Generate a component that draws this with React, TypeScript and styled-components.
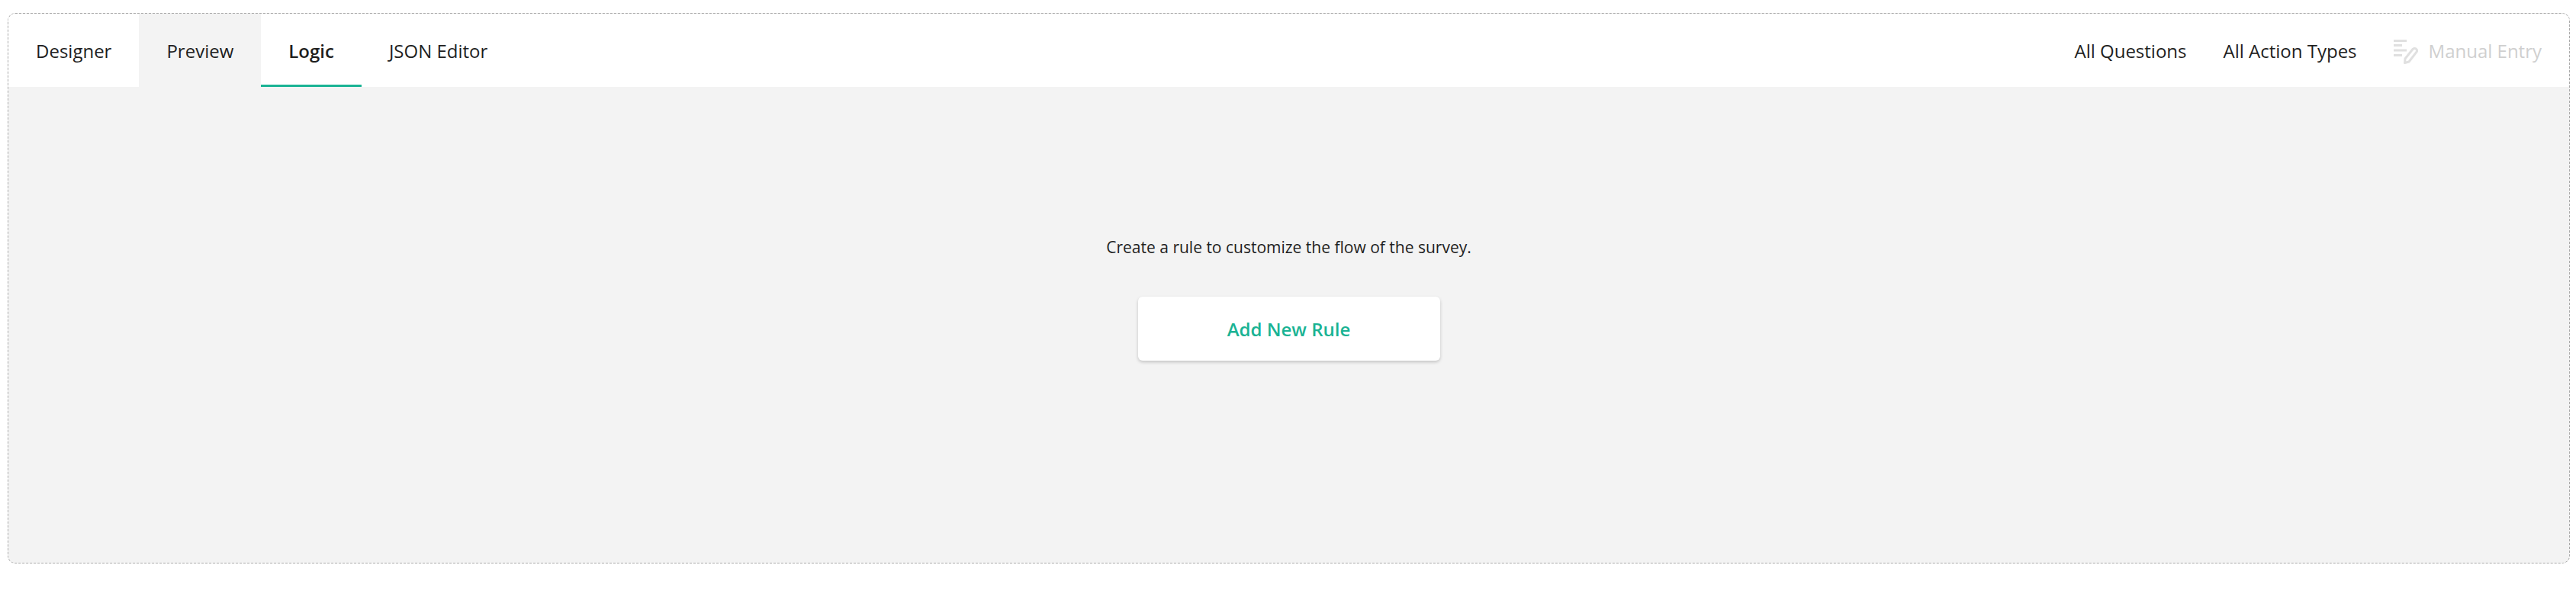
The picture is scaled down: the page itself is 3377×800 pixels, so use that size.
import styled, { createGlobalStyle } from 'styled-components';

const GlobalStyle = createGlobalStyle`
  html,
  body {
    margin: 0;
    padding: 0;
    background: #fff;
    font-family: 'Open Sans', 'Noto Sans', sans-serif;
    color: #1f1f1f;
  }
`;

const Page = styled.div`
  padding: 17px 8px 0 10px;
`;

const Frame = styled.div`
  height: 722px;
  box-sizing: border-box;
  display: flex;
  flex-direction: column;
  border: 1px dashed #aaa;
  border-radius: 10px;
  overflow: hidden;
  background: #f3f3f3;
`;

const Header = styled.div`
  flex: none;
  height: 96px;
  display: flex;
  justify-content: space-between;
  background: #fff;
`;

const Tabs = styled.div`
  display: flex;
`;

const Tab = styled.div<{ $active?: boolean; $hovered?: boolean }>`
  display: flex;
  align-items: center;
  padding: 0 36px;
  font-size: 24px;
  font-weight: ${(p) => (p.$active ? 600 : 400)};
  background: ${(p) => (p.$hovered ? '#f3f3f3' : '#fff')};
  box-shadow: ${(p) => (p.$active ? 'inset 0 -3px 0 #1ab394' : 'none')};
`;

const Actions = styled.div`
  display: flex;
  align-items: center;
  gap: 48px;
  padding-right: 36px;
`;

const Action = styled.div<{ $disabled?: boolean }>`
  display: flex;
  align-items: center;
  gap: 14px;
  font-size: 24px;
  color: ${(p) => (p.$disabled ? '#cfcfcf' : '#1f1f1f')};
`;

const IconSvg = styled.svg`
  margin-top: 4px;
`;

const Empty = styled.div`
  flex: 1;
  display: flex;
  flex-direction: column;
  align-items: center;
  padding-top: 195px;
`;

const Message = styled.div`
  font-size: 21px;
  line-height: 30px;
`;

const AddButton = styled.button`
  width: 396px;
  height: 84px;
  margin-top: 50px;
  border: none;
  border-radius: 6px;
  background: #fff;
  box-shadow: 0 2px 4px rgba(0, 0, 0, 0.2);
  color: #1ab394;
  font-family: inherit;
  font-size: 24px;
  font-weight: 600;
`;

const ManualIcon = () => (
  <IconSvg width="32" height="32" viewBox="0 0 32 32" fill="none">
    <path d="M0 1.500h17M0 7.500h11M0 14h17M0 20.500h11" stroke="#e0e0e0" strokeWidth="3" />
    <path
      d="M14.500 30.500l.5-5.500 10-12.500c1-1.200 3-1.500 4.300-.4s1.500 3 .5 4.300L20 29z"
      stroke="#e0e0e0"
      strokeWidth="3"
      strokeLinejoin="round"
    />
  </IconSvg>
);

export default function App() {
  return (
    <>
      <GlobalStyle />
      <Page>
        <Frame>
          <Header>
            <Tabs>
              <Tab>Designer</Tab>
              <Tab $hovered>Preview</Tab>
              <Tab $active>Logic</Tab>
              <Tab>JSON Editor</Tab>
            </Tabs>
            <Actions>
              <Action>All Questions</Action>
              <Action>All Action Types</Action>
              <Action $disabled>
                <ManualIcon />
                Manual Entry
              </Action>
            </Actions>
          </Header>
          <Empty>
            <Message>Create a rule to customize the flow of the survey.</Message>
            <AddButton>Add New Rule</AddButton>
          </Empty>
        </Frame>
      </Page>
    </>
  );
}
